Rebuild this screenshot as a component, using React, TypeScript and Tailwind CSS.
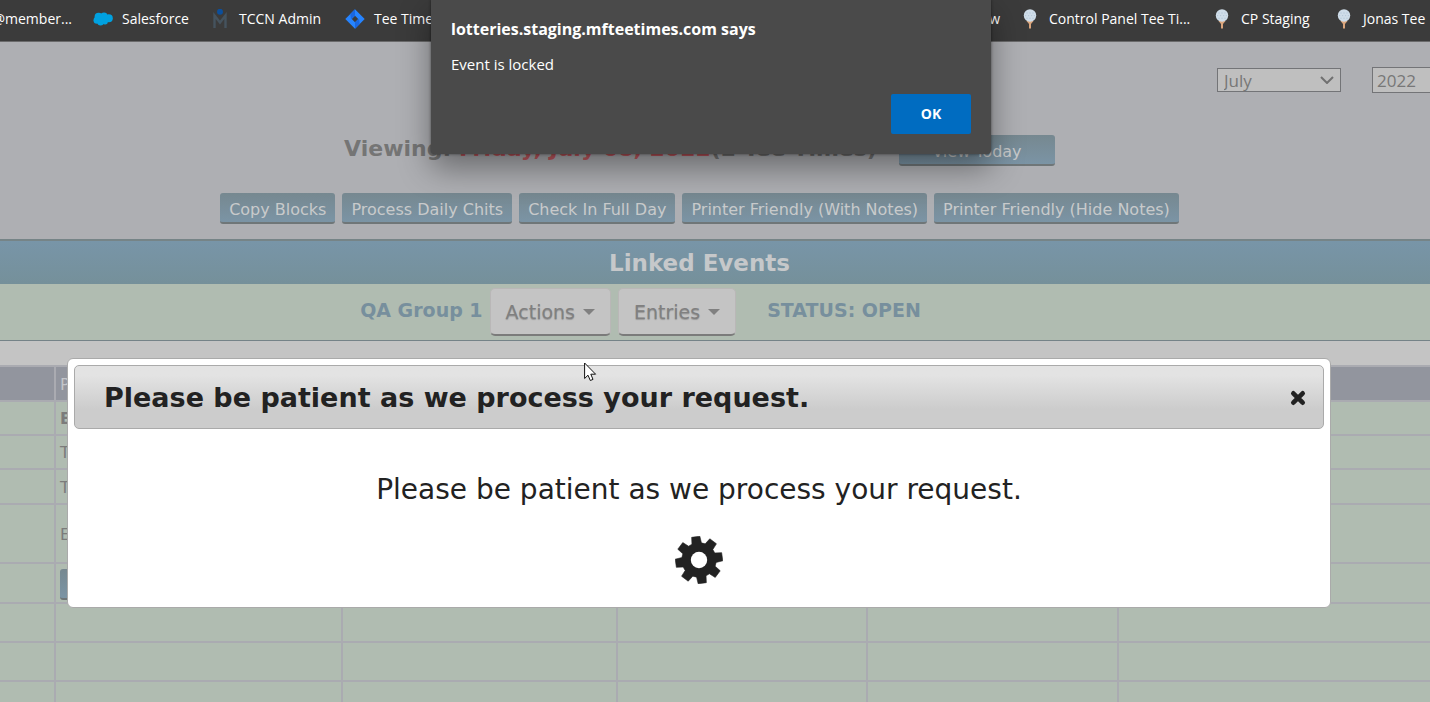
import type { ReactNode } from "react";

const CloudIcon = () => (
  <svg viewBox="0 0 20 20" className="h-5 w-5 shrink-0" aria-hidden="true">
    <g fill="#00a1e0">
      <circle cx="5.6" cy="7.8" r="4" />
      <circle cx="11" cy="6.9" r="3.4" />
      <circle cx="15.8" cy="9.3" r="4" />
      <circle cx="4" cy="11.2" r="3.5" />
      <circle cx="7.6" cy="13.2" r="3.2" />
      <circle cx="12" cy="12.6" r="2.9" />
      <rect x="4" y="7" width="11" height="6" />
    </g>
  </svg>
);

const PersonIcon = () => (
  <svg viewBox="0 0 20 20" className="h-5 w-5 shrink-0" aria-hidden="true">
    <path d="M4.5 19V6.5L10 13.5L15.5 6.5V19" fill="none" stroke="#45535e" strokeWidth="2.4" />
    <circle cx="10" cy="2.8" r="3" fill="#0c4f9c" />
  </svg>
);

const DiamondIcon = () => (
  <svg viewBox="0 0 20 20" className="h-5 w-5 shrink-0" aria-hidden="true">
    <path
      fillRule="evenodd"
      fill="#2684ff"
      d="M10 .3L19.7 10L10 19.7L.3 10ZM10 6.8L6.8 10L10 13.2L13.2 10Z"
    />
    <path d="M10 .3V6.8L6 10.2L5.3 5Z" fill="#1a67e0" />
    <path d="M10 19.7V13.2L14 9.8L14.7 15Z" fill="#1a67e0" />
  </svg>
);

const GolfIcon = () => (
  <svg viewBox="0 0 20 20" className="h-5 w-5 shrink-0" aria-hidden="true">
    <path d="M6.5 12H13.5L11 15V19.5H9V15Z" fill="#dba57c" />
    <circle cx="10" cy="6.5" r="6.2" fill="#cfdde9" />
    <g fill="#b4c8d8">
      <circle cx="7" cy="4" r=".7" />
      <circle cx="10" cy="4" r=".7" />
      <circle cx="13" cy="4" r=".7" />
      <circle cx="5.6" cy="6.6" r=".7" />
      <circle cx="8.6" cy="6.6" r=".7" />
      <circle cx="11.6" cy="6.6" r=".7" />
      <circle cx="14.4" cy="6.6" r=".7" />
      <circle cx="7" cy="9.2" r=".7" />
      <circle cx="10" cy="9.2" r=".7" />
      <circle cx="13" cy="9.2" r=".7" />
    </g>
  </svg>
);

type BookmarkProps = { label: string; width: string; icon?: ReactNode; end?: boolean };

const Bookmark = ({ label, width, icon, end }: BookmarkProps) => (
  <a href="#" className={`flex shrink-0 items-center gap-[9px] whitespace-nowrap ${width} ${end ? "justify-end" : ""}`}>
    {icon}
    {label}
  </a>
);

const bookmarks: BookmarkProps[] = [
  { label: "@member...", width: "w-[72px]", end: true },
  { label: "Salesforce", width: "w-24", icon: <CloudIcon /> },
  { label: "TCCN Admin", width: "w-[114px]", icon: <PersonIcon /> },
  { label: "Tee Times", width: "w-24", icon: <DiamondIcon /> },
];

const rightBookmarks: BookmarkProps[] = [
  { label: "w", width: "w-4", end: true },
  { label: "Control Panel Tee Ti...", width: "w-[172px]", icon: <GolfIcon /> },
  { label: "CP Staging", width: "w-[102px]", icon: <GolfIcon /> },
  { label: "Jonas Tee", width: "w-24", icon: <GolfIcon /> },
];

const BlueButton = ({ children, className = "" }: { children?: ReactNode; className?: string }) => (
  <button
    type="button"
    className={`h-[31px] shrink-0 whitespace-nowrap rounded-[3px] border-b-2 border-[#6f7678] bg-linear-to-b from-[#768890] to-[#7b94a5] px-[9px] pt-1 text-base leading-6 text-[#c8cacb] ${className}`}
  >
    {children}
  </button>
);

const MenuButton = ({ children }: { children: ReactNode }) => (
  <button
    type="button"
    className="flex h-12 items-center gap-2 rounded-[5px] border border-b-2 border-[#b9b7b7] border-b-[#7b7b7b] bg-[#c4c4c4] px-[15px] pt-px text-[19px] text-[#808080] text-shadow-[0_1px_1px_#999]"
  >
    {children}
    <svg viewBox="0 0 12 6" className="h-[6px] w-3" aria-hidden="true">
      <path d="M0 0H12L6 6Z" fill="#808080" />
    </svg>
  </button>
);

const rows: { height: string; text?: ReactNode }[] = [
  { height: "h-[34px]", text: <b>E</b> },
  { height: "h-[34px]", text: "T" },
  { height: "h-[35px]", text: "T" },
  { height: "h-[59px]", text: "E" },
  { height: "h-10", text: <BlueButton className="block w-20" /> },
  { height: "h-[39px]" },
  { height: "h-[39px]" },
  { height: "h-[39px]" },
];

const columns = ["w-[54px]", "w-[287px]", "w-[275px]", "w-[250px]", "w-[251px]", ""];

const polar = (radius: number, degrees: number) => {
  const a = (degrees * Math.PI) / 180;
  return `${(24 + radius * Math.sin(a)).toFixed(2)} ${(24 - radius * Math.cos(a)).toFixed(2)}`;
};

const gearPath =
  "M" +
  Array.from({ length: 8 }, (_, i) => {
    const c = i * 45 - 8;
    return [polar(17.3, c - 16), polar(23.8, c - 10), polar(23.8, c + 10), polar(17.3, c + 16)].join("L");
  }).join("L") +
  "Z";

const Gear = () => (
  <svg viewBox="0 0 48 48" className="h-12 w-12" role="img" aria-label="Processing">
    <path d={gearPath} fill="#222" stroke="#222" strokeWidth=".6" strokeLinejoin="round" />
    <circle cx="24" cy="24" r="8.2" fill="#fff" />
  </svg>
);

export default function App() {
  return (
    <div className="relative h-screen min-h-[702px] overflow-hidden bg-[#c4c4c4] font-['DejaVu_Sans',Verdana,sans-serif]">
      <nav className="flex h-[42px] justify-between gap-5 border-b border-[#6b6b6c] bg-[#3b3b3b] pb-1 font-['Open_Sans',sans-serif] text-sm text-white">
        <div className="flex min-w-0 gap-[21px]">
          {bookmarks.map((b) => (
            <Bookmark key={b.label} {...b} />
          ))}
        </div>
        <div className="flex shrink-0 gap-5">
          {rightBookmarks.map((b) => (
            <Bookmark key={b.label} {...b} />
          ))}
        </div>
      </nav>

      <header className="h-[197px] overflow-hidden bg-[#aeafb3]">
        <div className="flex items-center justify-end gap-[31px] pt-[25px] font-['Open_Sans',sans-serif] text-[17px] text-[#777]">
          <div className="relative">
            <select
              aria-label="Month"
              className="block h-6 w-[124px] appearance-none border border-[#737477] bg-[#bfbfbf] px-[6px] pt-px leading-[22px]"
            >
              <option>July</option>
            </select>
            <svg viewBox="0 0 14 8" className="pointer-events-none absolute top-2 right-[7px] h-2 w-[14px]" aria-hidden="true">
              <path d="M1 1L7 7L13 1" fill="none" stroke="#707070" strokeWidth="2" />
            </svg>
          </div>
          <select
            aria-label="Year"
            className="-mr-10 block h-[26px] w-[98px] appearance-none border border-[#737477] bg-[#bfbfbf] px-1 pt-px leading-6"
          >
            <option>2022</option>
          </select>
        </div>

        <div className="mt-[42px] flex items-center justify-center gap-[22px] pr-[31px]">
          <h1 className="-mt-1 whitespace-nowrap text-[22px] leading-7 font-bold text-[#757575]">
            Viewing: <span className="text-[#c25a60]">Friday, July 08, 2022</span>(2 Tee Times)
          </h1>
          <BlueButton className="w-[156px]">View Today</BlueButton>
        </div>

        <div className="mt-[27px] flex justify-center gap-[7px] pr-[31px]">
          <BlueButton>Copy Blocks</BlueButton>
          <BlueButton>Process Daily Chits</BlueButton>
          <BlueButton>Check In Full Day</BlueButton>
          <BlueButton>Printer Friendly (With Notes)</BlueButton>
          <BlueButton>Printer Friendly (Hide Notes)</BlueButton>
        </div>
      </header>

      <h2 className="h-[45px] border-t-2 border-[#768487] bg-linear-to-b from-[#7895a8] to-[#75909a] pr-[31px] text-center text-[23px] leading-[45px] font-bold text-[#c6c8ca]">
        Linked Events
      </h2>

      <section className="flex h-[57px] items-start justify-center gap-[7px] border-b border-[#758388] bg-[#b0bcb1] pt-1 pr-[149px] text-[19px] font-bold text-[#778f9d]">
        <span className="leading-[45px]">QA Group 1</span>
        <div className="flex gap-[7px] font-normal">
          <MenuButton>Actions</MenuButton>
          <MenuButton>Entries</MenuButton>
        </div>
        <span className="ml-6 leading-[45px]">STATUS: OPEN</span>
      </section>

      <table className="mt-6 w-full table-fixed border-separate border-spacing-0 text-base leading-5 text-[#7b7b7b]">
        <colgroup>
          {columns.map((width, i) => (
            <col key={i} className={width} />
          ))}
        </colgroup>
        <thead>
          <tr className="h-[35px] bg-[#92959e] text-left text-[#c4c6ca]">
            <th className="border-t-2 border-[#aaabb1] p-0" />
            <th className="border-t-2 border-l-2 border-[#aaabb1] p-0 pt-[2px] pl-1 font-normal">P</th>
            <th colSpan={4} className="border-t-2 border-[#aaabb1] p-0" />
          </tr>
        </thead>
        <tbody>
          {rows.map((row, r) => (
            <tr key={r} className={`bg-[#b0bcb1] ${row.height}`}>
              <td className="border-t-2 border-[#aaabb1] p-0" />
              <td className="border-t-2 border-l-2 border-[#aaabb1] p-0 pt-[2px] pl-1">{row.text}</td>
              <td className="border-t-2 border-l-2 border-[#aaabb1] p-0" />
              <td className="border-t-2 border-l-2 border-[#aaabb1] p-0" />
              <td className="border-t-2 border-l-2 border-[#aaabb1] p-0" />
              <td className="border-t-2 border-l-2 border-[#aaabb1] p-0" />
            </tr>
          ))}
        </tbody>
      </table>

      <div
        role="dialog"
        aria-labelledby="wait-title"
        className="absolute top-[358px] right-[99px] left-[67px] rounded-md border border-[#aaa] bg-white p-[6px] pb-[23px] text-[#222]"
      >
        <div className="flex h-16 items-center justify-between rounded-[5px] border border-[#aaa] bg-linear-to-b from-[#e3e3e3] from-15% to-[#ccc] to-70% pt-[2px] pr-[17px] pl-[29px]">
          <h2 id="wait-title" className="text-[27px] font-bold">
            Please be patient as we process your request.
          </h2>
          <button type="button" aria-label="Close">
            <svg viewBox="0 0 16 16" className="h-4 w-4" aria-hidden="true">
              <path d="M3.3 3.3L12.7 12.7M12.7 3.3L3.3 12.7" stroke="#222" strokeWidth="4.6" strokeLinecap="round" />
            </svg>
          </button>
        </div>
        <div className="flex flex-col items-center pt-[41px]">
          <p className="text-[28px] leading-10">Please be patient as we process your request.</p>
          <div className="mt-[26px]">
            <Gear />
          </div>
        </div>
      </div>

      <div
        role="alertdialog"
        aria-labelledby="alert-title"
        className="absolute top-0 left-1/2 -ml-[284px] flex w-[560px] flex-col rounded-b-[4px] bg-[#4a4a4a] px-5 pt-4 pb-5 font-['Open_Sans',sans-serif] text-white shadow-[0_0_3px_rgba(0,0,0,0.5),0_14px_32px_rgba(0,0,0,0.4)]"
      >
        <h2 id="alert-title" className="text-base leading-[26px] font-bold">
          lotteries.staging.mfteetimes.com says
        </h2>
        <p className="mt-3 text-[15px] leading-5">Event is locked</p>
        <button type="button" className="mt-5 h-10 w-20 self-end rounded-[2px] bg-[#006cc1] text-sm font-bold">
          OK
        </button>
      </div>

      <svg viewBox="0 0 13 20" className="pointer-events-none absolute top-[362px] left-[584px] h-5 w-[13px]" aria-hidden="true">
        <path
          d="M.6 1V16.5L4 13.2L6.3 18.5L9 17.4L6.8 12.2H11.6Z"
          fill="#fff"
          stroke="#111"
          strokeWidth="1"
          strokeLinejoin="round"
        />
      </svg>
    </div>
  );
}
